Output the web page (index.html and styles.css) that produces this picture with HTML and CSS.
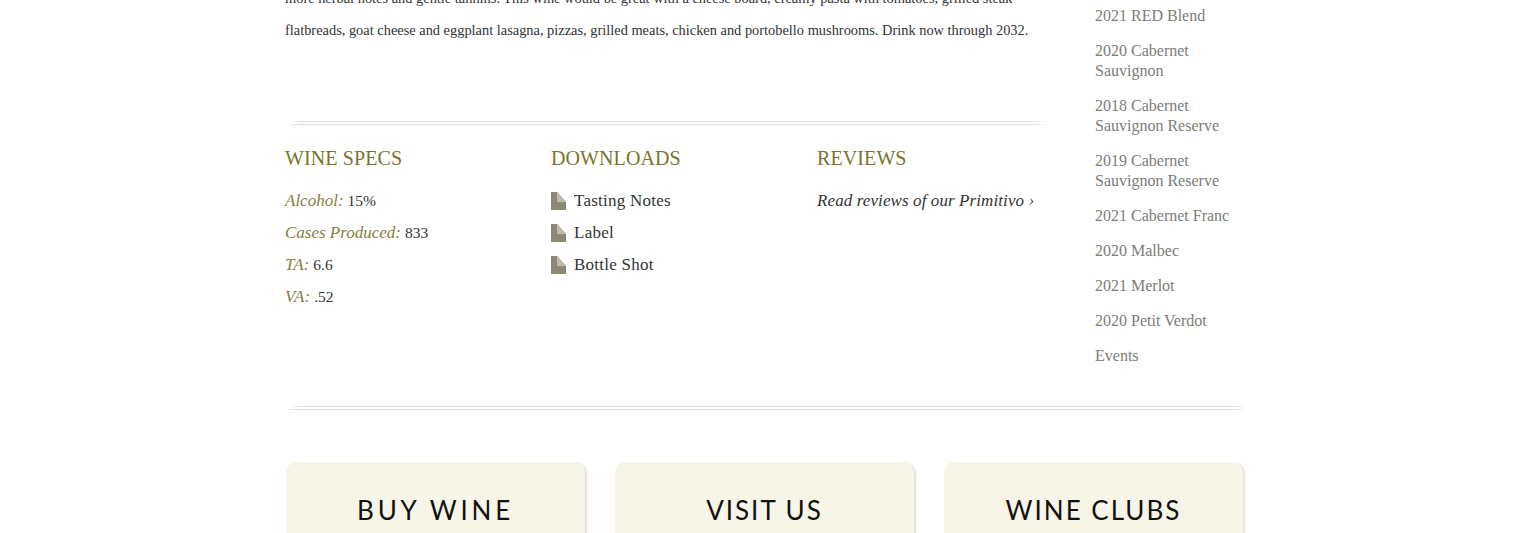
FILE: index.html
```html
<!DOCTYPE html>
<html lang="en">
  <head>
    <meta charset="UTF-8" />
    <meta name="viewport" content="width=device-width, initial-scale=1.0" />
    <title>Primitivo</title>
    <link rel="stylesheet" href="styles.css">
  </head>
  <body>
    <div class="wrap">
      <div class="columns">
        <div class="main">
          <p class="notes">more herbal notes and gentle tannins. This wine would be great with a cheese board, creamy pasta with tomatoes, grilled steak flatbreads, goat cheese and eggplant lasagna, pizzas, grilled meats, chicken and portobello mushrooms. Drink now through 2032.</p>
          <div class="rule"></div>
          <div class="info">
            <div class="info-col">
              <h3>WINE SPECS</h3>
              <p class="row"><em>Alcohol:</em> <span class="val">15%</span></p>
              <p class="row"><em>Cases Produced:</em> <span class="val">833</span></p>
              <p class="row"><em>TA:</em> <span class="val">6.6</span></p>
              <p class="row"><em>VA:</em> <span class="val">.52</span></p>
            </div>
            <div class="info-col">
              <h3>DOWNLOADS</h3>
              <a class="row file" href="#">
                <svg width="15" height="18" viewBox="0 0 15 18"><path fill="#8a8877" d="M0 0h6l9 10v8H0z"/><path fill="#bdbbae" d="M6 0l9 10H6z"/></svg>
                Tasting Notes
              </a>
              <a class="row file" href="#">
                <svg width="15" height="18" viewBox="0 0 15 18"><path fill="#8a8877" d="M0 0h6l9 10v8H0z"/><path fill="#bdbbae" d="M6 0l9 10H6z"/></svg>
                Label
              </a>
              <a class="row file" href="#">
                <svg width="15" height="18" viewBox="0 0 15 18"><path fill="#8a8877" d="M0 0h6l9 10v8H0z"/><path fill="#bdbbae" d="M6 0l9 10H6z"/></svg>
                Bottle Shot
              </a>
            </div>
            <div class="info-col">
              <h3>REVIEWS</h3>
              <a class="row review" href="#">Read reviews of our Primitivo ›</a>
            </div>
          </div>
        </div>
        <ul class="side">
          <li>2021 RED Blend</li>
          <li>2020 Cabernet Sauvignon</li>
          <li>2018 Cabernet Sauvignon Reserve</li>
          <li>2019 Cabernet Sauvignon Reserve</li>
          <li>2021 Cabernet Franc</li>
          <li>2020 Malbec</li>
          <li>2021 Merlot</li>
          <li>2020 Petit Verdot</li>
          <li>Events</li>
        </ul>
      </div>
      <div class="rule rule-wide"></div>
      <div class="cards">
        <a class="card card-buy" href="#">Buy wine</a>
        <a class="card" href="#">Visit us</a>
        <a class="card" href="#">Wine clubs</a>
      </div>
    </div>
  </body>
</html>
```

FILE: styles.css
```css
html,
body {
  height: 533px;
  overflow: hidden;
}
body {
  margin: 0;
  background-color: #fff;
  font-family: "Liberation Serif", "DejaVu Serif", serif;
  color: #222;
}
a {
  color: inherit;
  text-decoration: none;
}
.wrap {
  width: 960px;
  margin: -17px auto 0;
}
.columns {
  display: flex;
  justify-content: space-between;
}
.main {
  width: 760px;
}
.notes {
  margin: -1px 0 0;
  font-size: 14.4px;
  line-height: 32px;
  color: #333;
}
.rule {
  height: 4px;
  margin-top: 75px;
  background:
    linear-gradient(to right, transparent 0, #dcdcd8 10px, #dcdcd8 calc(100% - 10px), transparent 100%) 6px 0 / calc(100% - 6px) 1px no-repeat,
    linear-gradient(to right, transparent 0, #dcdcd8 10px, #dcdcd8 calc(100% - 10px), transparent 100%) 0 3px / 100% 1px no-repeat;
}
.info {
  display: flex;
  margin-top: 20px;
}
.info-col {
  width: 266px;
}
.info-col:last-child {
  width: 228px;
}
h3 {
  margin: 0 0 14px;
  font-size: 20px;
  line-height: 26px;
  font-weight: normal;
  letter-spacing: 0.1px;
  color: #77752c;
}
.row {
  display: flex;
  align-items: center;
  gap: 4px;
  margin: 0;
  height: 32px;
  font-size: 17px;
  color: #333;
}
.row em {
  color: #85803c;
}
.val {
  font-size: 15.5px;
}
.file {
  gap: 8px;
  letter-spacing: 0.25px;
}
.review {
  font-style: italic;
  letter-spacing: 0.1px;
}
.side {
  width: 150px;
  margin: 0;
  padding: 23px 0 0;
  list-style: none;
  font-size: 16px;
  line-height: 20px;
  color: #7c7c78;
}
.side li {
  margin-bottom: 15px;
}
.rule-wide {
  margin-top: 25px;
}
.cards {
  display: flex;
  gap: 30px;
  margin-top: 52px;
  padding-left: 1px;
}
.card {
  box-sizing: border-box;
  width: 299px;
  height: 100px;
  padding-top: 30px;
  background-color: #f7f5e8;
  border-radius: 10px 10px 0 0;
  box-shadow: 2px 1px 2px #e2e2dc;
  text-align: center;
  font-family: Lato, sans-serif;
  font-size: 26px;
  line-height: 36px;
  letter-spacing: 2px;
  text-transform: uppercase;
  color: #111;
}
.card-buy {
  letter-spacing: 3.8px;
}
```
